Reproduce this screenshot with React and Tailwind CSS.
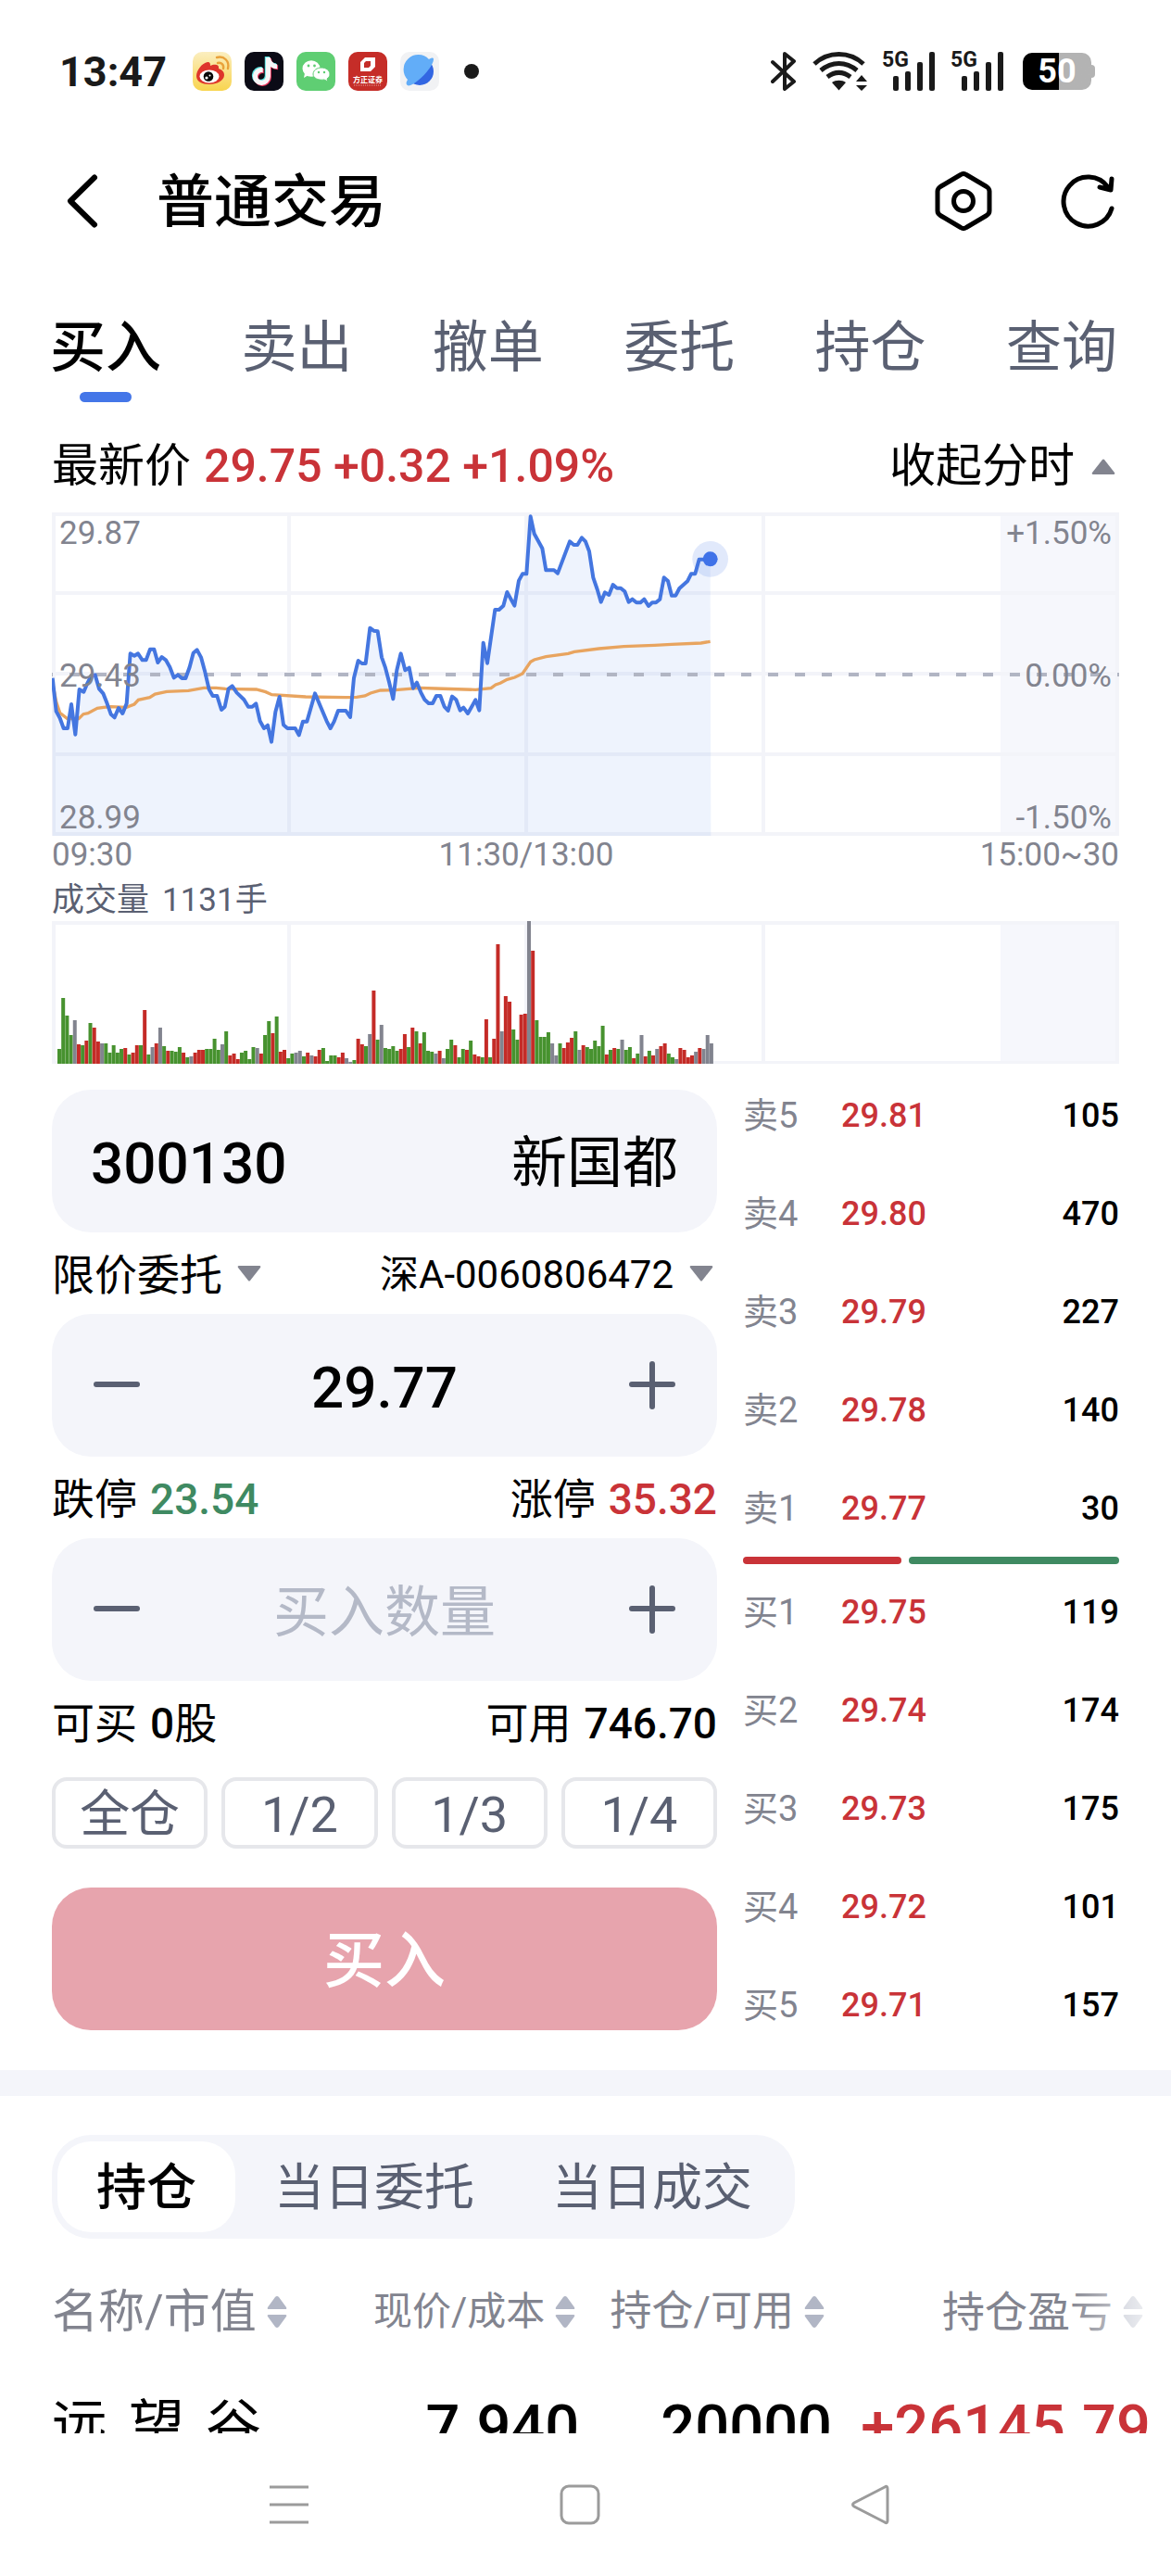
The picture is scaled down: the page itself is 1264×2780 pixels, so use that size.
import { useState } from "react";
import { FaTiktok } from "react-icons/fa6";

const tabs = ["买入", "卖出", "撤单", "委托", "持仓", "查询"];

const asks = [
  ["卖5", "29.81", 105],
  ["卖4", "29.80", 470],
  ["卖3", "29.79", 227],
  ["卖2", "29.78", 140],
  ["卖1", "29.77", 30],
];

const bids = [
  ["买1", "29.75", 119],
  ["买2", "29.74", 174],
  ["买3", "29.73", 175],
  ["买4", "29.72", 101],
  ["买5", "29.71", 157],
];

const priceLine =
  "50,575 62,683 74,705 86,738 99,738 111,660 124,758 137,612 151,620 163,592 175,568 188,565 201,610 214,625 227,658 239,692 251,703 264,672 277,690 290,658 302,496 315,503 327,496 341,517 353,517 366,482 379,482 391,525 404,507 417,517 430,540 443,574 456,565 469,576 481,576 494,540 506,494 518,484 531,508 544,556 557,612 569,633 583,633 597,678 608,668 620,610 632,601 647,623 670,645 684,668 697,668 709,658 722,715 735,738 747,728 759,782 772,685 785,636 798,727 811,738 836,738 848,760 861,716 874,716 900,625 938,715 950,738 962,716 975,681 1000,681 1014,702 1026,575 1040,519 1052,528 1064,528 1078,413 1090,422 1103,424 1116,508 1128,542 1140,588 1153,643 1165,550 1178,496 1192,550 1205,542 1218,608 1230,590 1243,622 1255,645 1268,657 1281,657 1293,633 1306,633 1319,668 1331,681 1344,635 1357,645 1370,680 1381,671 1395,690 1420,646 1432,680 1445,461 1458,527 1483,354 1496,354 1510,341 1522,297 1546,341 1560,260 1572,238 1585,238 1598,52 1610,108 1636,155 1648,226 1674,226 1686,236 1725,133 1738,144 1750,144 1764,121 1776,133 1788,165 1801,250 1814,288 1826,329 1839,298 1852,306 1865,273 1878,284 1890,284 1903,295 1916,329 1928,320 1941,331 1954,331 1966,320 1980,342 1992,331 2004,331 2017,320 2030,250 2043,261 2055,308 2068,308 2080,285 2106,262 2118,238 2131,238 2144,191 2180,191";

const averageLine =
  "50,590 62,652 74,688 98,707 135,707 150,692 165,689 195,673 215,670 240,668 290,670 315,660 328,646 365,638 382,627 420,619 490,616 540,607 580,607 610,610 710,612 740,620 760,629 870,636 1000,638 1035,637 1062,633 1080,624 1112,615 1160,614 1240,607 1290,609 1420,613 1470,608 1485,597 1500,592 1522,580 1547,573 1572,561 1598,523 1610,516 1648,506 1720,496 1740,490 1820,480 1900,473 2000,469 2055,466 2150,462 2180,457";

// g = down, r = up, k = flat, followed by the bar height
const volumes =
  "g16 g71 g52 g31 k47 r21 g20 r25 g44 r39 r24 k22 g22 g12 g20 g12 g16 r17 g10 r12 r20 g20 r58 g10 k18 r22 k39 g19 r14 g14 g13 g18 r12 g7 k8 r12 r15 r15 g16 g16 g27 g15 k21 g35 r9 r11 r5 g12 g14 g5 g18 k17 r11 g31 g46 r33 g51 r13 r15 g6 g11 k12 k14 g8 r12 k9 r8 r15 g17 g3 g9 g9 r7 r12 k6 k2 g4 r27 r21 g19 k32 r79 g26 k42 g17 g16 g19 g14 r16 r32 g18 r39 g35 r22 g34 g14 g13 k11 r14 k6 g16 g26 r20 g7 g16 r15 g25 r10 r8 g7 r48 g7 r27 r129 k35 r73 r67 g37 g26 r53 r54 k154 r122 g47 g29 g29 g34 k22 k9 g22 r17 r23 r28 g35 k15 r20 g18 g16 g25 g19 g41 r10 g15 r17 g16 k26 g15 g18 r6 g11 k31 r8 g14 r9 k16 r19 r22 g11 g7 k5 r17 r15 r7 r9 k13 r17 k16 k31 k22"
    .split(" ")
    .map((v) => ({ side: v[0], height: Number(v.slice(1)) }));

const barColors = { g: "#47922f", r: "#c42b27", k: "#82848f" };

function AppIcons() {
  return (
    <div className="flex items-center gap-[14px]">
      <svg className="size-[42px]" viewBox="0 0 42 42" aria-label="微博">
        <defs>
          <linearGradient id="weibo" x1="0" y1="0" x2="0" y2="1">
            <stop offset="0" stopColor="#fbeec0" />
            <stop offset="1" stopColor="#f8d44e" />
          </linearGradient>
        </defs>
        <rect width="42" height="42" rx="10" fill="url(#weibo)" />
        <path
          d="M4 26c0-6 6-14 12-15 3 0 3 2 3 4 4-2 10-2 9 3 3 1 6 3 6 7 0 6-8 10-16 10S4 32 4 26z"
          fill="#de352b"
        />
        <ellipse cx="18" cy="26.500" rx="10.500" ry="7" fill="#fff" />
        <circle cx="17" cy="26.500" r="5.300" fill="#080808" />
        <circle cx="15" cy="28" r="1.600" fill="#fff" />
        <circle cx="18.500" cy="25.500" r="1" fill="#fff" />
        <path
          d="M27 12c4-1 7 2 6 6M26 6c8-2 14 4 12 12"
          fill="none"
          stroke="#e9a13a"
          strokeWidth="2.400"
          strokeLinecap="round"
        />
      </svg>
      <svg className="size-[42px]" viewBox="0 0 42 42" aria-label="抖音">
        <rect width="42" height="42" rx="10" fill="#0b0b16" />
        <FaTiktok x="6" y="5" size="30" color="#57e3e2" />
        <FaTiktok x="8" y="7" size="30" color="#e8365d" />
        <FaTiktok x="7" y="6" size="30" color="#f6f6f8" />
      </svg>
      <svg className="size-[42px]" viewBox="0 0 42 42" aria-label="微信">
        <rect width="42" height="42" rx="10" fill="#5fce73" />
        <path d="M9 23l-1 5 5-3z" fill="#fff" />
        <ellipse cx="16" cy="18" rx="9.500" ry="8.800" fill="#fff" />
        <path
          d="M27 17c5 0 9 3 9 7 0 2-1 4-3 5l1 3-4-2c-7 1-12-2-12-6s4-7 9-7z"
          fill="#fff"
          stroke="#5fce73"
          strokeWidth="1"
        />
        <g fill="#5fce73">
          <circle cx="13" cy="15" r="1.400" />
          <circle cx="19.500" cy="15" r="1.400" />
          <circle cx="24" cy="22" r="1.200" />
          <circle cx="30" cy="22" r="1.200" />
        </g>
      </svg>
      <svg className="size-[42px]" viewBox="0 0 42 42" aria-label="方正证券">
        <rect width="42" height="42" rx="10" fill="#c52d28" />
        <path
          d="M18 6h11v10l-5 5H13V11zM19 10l-2 2v5h5l2-2v-5z"
          fill="#fff"
          fillRule="evenodd"
        />
        <text x="21" y="33" fontSize="8" fontWeight="700" textAnchor="middle" fill="#fff">
          方正证券
        </text>
        <path d="M6 36h30" stroke="#e7a5a2" strokeDasharray="1 1" />
      </svg>
      <svg className="size-[42px]" viewBox="0 0 42 42" aria-label="浏览器">
        <rect width="42" height="42" rx="10" fill="#f1f2f4" />
        <circle cx="21" cy="21" r="15" fill="#3266e2" />
        <path
          d="M31 8c3-2 5-2 5 0 0 5-8 16-17 23-6 5-11 7-12 4-1-1 0-3 1-5a15 15 0 0 1 23-22z"
          fill="#62adf8"
        />
      </svg>
      <span className="ml-[13px] size-4 rounded-full bg-[#1a1a1a]" />
    </div>
  );
}

function Signal() {
  return (
    <div className="relative">
      <span className="absolute top-0 left-0 text-[23px] leading-[18px] font-bold">5G</span>
      <svg className="h-[42px] w-[58px]" viewBox="0 0 58 42" fill="#1a1a1a">
        <rect x="12" y="26" width="6" height="16" rx="2" />
        <rect x="25" y="21" width="6" height="21" rx="2" />
        <rect x="38" y="11" width="6" height="31" rx="2" />
        <rect x="51" y="0" width="6" height="42" rx="2" />
      </svg>
    </div>
  );
}

function StatusBar() {
  return (
    <div className="flex h-[152px] items-center justify-between pt-[2px] pr-[82px] pl-16 text-[#1a1a1a]">
      <div className="flex items-center gap-7">
        <span className="text-[45px] leading-none font-bold">13:47</span>
        <AppIcons />
      </div>
      <div className="flex items-center gap-4">
        <svg className="h-11 w-7" viewBox="0 0 28 44" fill="none" stroke="#1a1a1a" strokeWidth="4">
          <path d="M2 12l23 21-10 8V3l10 8L2 33" strokeLinecap="round" strokeLinejoin="round" />
        </svg>
        <svg className="h-[42px] w-[60px]" viewBox="0 0 60 42" fill="none" stroke="#1a1a1a" strokeWidth="5">
          <path d="M3 13C18-1 41-1 56 13M10 20c12-10 27-10 39 0M17 27c8-6 17-6 25 0" />
          <path d="M22 33c4-3 11-3 15 0l-7.500 8.500z" fill="#1a1a1a" stroke="none" />
          <path d="M48 32l6-7 6 7zM48 36l6 6 6-6z" fill="#1a1a1a" stroke="none" />
        </svg>
        <Signal />
        <Signal />
        <div className="flex items-center pl-1">
          <span className="flex h-10 w-[74px] items-center justify-center rounded-[10px] bg-linear-to-r from-black from-53% to-[#b3b3b3] to-53% text-[36px] leading-none font-bold text-white">
            50
          </span>
          <span className="h-[14px] w-[4px] rounded-r bg-[#b3b3b3]" />
        </div>
      </div>
    </div>
  );
}

function Header() {
  return (
    <header className="flex h-[130px] items-center justify-between pr-[58px] pl-[70px]">
      <div className="flex items-center gap-[62px]">
        <button aria-label="返回">
          <svg className="h-[60px] w-[37px]" viewBox="0 0 37 60" fill="none" stroke="#000" strokeWidth="6">
            <path d="M32 4.500L6 30l26 25.500" strokeLinecap="round" strokeLinejoin="round" />
          </svg>
        </button>
        <h1 className="pt-1 text-[62px] leading-none font-medium">普通交易</h1>
      </div>
      <div className="flex items-center gap-[70px]">
        <button aria-label="设置">
          <svg className="size-16" viewBox="0 0 64 64" fill="none" stroke="#000" strokeWidth="5">
            <path
              d="M29 3.500q3-2 6 0l22 13q3 2 3 5v21q0 3-3 5l-22 13q-3 2-6 0l-22-13q-3-2-3-5v-21q0-3 3-5z"
              strokeLinejoin="round"
            />
            <circle cx="32" cy="32" r="10.500" />
          </svg>
        </button>
        <button aria-label="刷新">
          <svg className="size-16" viewBox="0 0 64 64" fill="none" stroke="#000" strokeWidth="5" strokeLinecap="round" strokeLinejoin="round">
            <path d="M58 40A26.500 26.500 0 1 1 54 17M58 8l-1 12-12-3" />
          </svg>
        </button>
      </div>
    </header>
  );
}

function PriceChart() {
  return (
    <div className="relative mt-5 text-[35px] leading-10 text-[#82848f]">
      <svg className="block w-full" viewBox="48 39 3456 1050">
        <rect x="3120" y="39" width="384" height="1047" fill="#f6f7fc" />
        <g stroke="#f3f4f9" strokeWidth="12" fill="none">
          <path d="M48 45H3504M48 300H3504M48 561H3504M48 822H3504M48 1080H3504" />
          <path d="M54 39V1086M816 39V1086M1584 39V1086M2352 39V1086M3498 39V1086" />
        </g>
        <polygon points={`50,1086 ${priceLine} 2182,1086`} fill="#4476e8" fillOpacity="0.09" />
        <path
          d="M48 564H3504"
          stroke="#b1b5c3"
          strokeWidth="12"
          strokeDasharray="33 54"
          strokeDashoffset="30"
        />
        <polyline points={averageLine} fill="none" stroke="#e8a45f" strokeWidth="10" />
        <polyline points={priceLine} fill="none" stroke="#4476e0" strokeWidth="12" strokeLinejoin="round" />
        <circle cx="2180" cy="190" r="58" fill="#4476e8" fillOpacity="0.16" />
        <circle cx="2180" cy="190" r="24" fill="#3f72e8" />
      </svg>
      <div className="absolute inset-0 flex flex-col justify-between px-2 pt-[3px]">
        <div className="flex justify-between">
          <span>29.87</span>
          <span>+1.50%</span>
        </div>
        <div className="flex justify-between">
          <span>29.43</span>
          <span>0.00%</span>
        </div>
        <div className="flex justify-between">
          <span>28.99</span>
          <span>-1.50%</span>
        </div>
      </div>
    </div>
  );
}

function VolumeChart() {
  return (
    <svg className="mt-[2px] block w-full" viewBox="0 0 1152 154">
      <rect x="1024" width="128" height="154" fill="#f6f7fc" />
      <path
        d="M0 2H1152M0 153H1152M2 0V154M256 0V154M512 0V154M768 0V154M1150 0V154"
        stroke="#f3f4f9"
        strokeWidth="4"
      />
      {volumes.map((v, i) => (
        <rect
          key={i}
          x={6 + i * 4.19}
          y={154 - v.height}
          width="4"
          height={v.height}
          fill={barColors[v.side]}
        />
      ))}
    </svg>
  );
}

function Triangle({ up }) {
  return (
    <svg
      className={up ? "h-[17px] w-[26px] rotate-180" : "pointer-events-none h-[17px] w-[26px]"}
      viewBox="0 0 26 17"
      fill="#82848f"
    >
      <path d="M2 0h22q2 0 1 2L14 16q-1 1-2 0L1 2Q0 0 2 0z" />
    </svg>
  );
}

function Stepper({ label, value, placeholder, onChange, onStep }) {
  return (
    <div className="flex h-[154px] items-center rounded-[42px] bg-[#f4f5fa] px-[44px]">
      <button aria-label={`减少${label}`} onClick={() => onStep(-1)}>
        <svg className="size-[52px]" viewBox="0 0 52 52" stroke="#5a6072" strokeWidth="6" strokeLinecap="round">
          <path d="M4 25h44" />
        </svg>
      </button>
      <input
        aria-label={label}
        value={value}
        placeholder={placeholder}
        onChange={(e) => onChange(e.target.value)}
        className="w-full min-w-0 flex-1 bg-transparent pt-[6px] text-center text-[62px] leading-[80px] font-medium outline-none placeholder:text-[60px] placeholder:font-normal placeholder:text-[#b4b9c7]"
      />
      <button aria-label={`增加${label}`} onClick={() => onStep(1)}>
        <svg className="size-[52px]" viewBox="0 0 52 52" stroke="#5a6072" strokeWidth="6" strokeLinecap="round">
          <path d="M4 25h44M26 3v46" />
        </svg>
      </button>
    </div>
  );
}

function OrderForm() {
  const [code, setCode] = useState("300130");
  const [price, setPrice] = useState("29.77");
  const [amount, setAmount] = useState("");

  return (
    <form className="w-[718px] shrink-0" onSubmit={(e) => e.preventDefault()}>
      <div className="flex h-[154px] items-center justify-between rounded-[42px] bg-[#f4f5fa] px-[42px] pt-[6px]">
        <input
          aria-label="股票代码"
          value={code}
          onChange={(e) => setCode(e.target.value)}
          className="w-full min-w-0 flex-1 bg-transparent text-[62px] leading-[80px] font-medium outline-none"
        />
        <span className="text-[60px] leading-[80px]">新国都</span>
      </div>

      <div className="flex h-[88px] items-center justify-between pr-1">
        <div className="flex items-center gap-4">
          <select aria-label="委托方式" className="appearance-none pt-1 text-[46px] leading-[60px] outline-none">
            <option>限价委托</option>
          </select>
          <Triangle />
        </div>
        <div className="flex items-center gap-4">
          <select aria-label="股东账户" className="appearance-none pt-1 text-[42px] leading-[60px] outline-none">
            <option>深A-0060806472</option>
          </select>
          <Triangle />
        </div>
      </div>

      <Stepper
        label="买入价格"
        value={price}
        onChange={setPrice}
        onStep={(d) => setPrice((Number(price) + d * 0.01).toFixed(2))}
      />

      <div className="flex h-[88px] items-center justify-between pt-1 text-[46px] leading-[60px]">
        <span className="flex gap-[14px]">
          跌停<span className="font-medium text-[#3f8a62]">23.54</span>
        </span>
        <span className="flex gap-[14px]">
          涨停<span className="font-medium text-[#c93338]">35.32</span>
        </span>
      </div>

      <Stepper
        label="买入数量"
        placeholder="买入数量"
        value={amount}
        onChange={setAmount}
        onStep={(d) => setAmount(String(Math.max(0, Number(amount) + d * 100)))}
      />

      <div className="flex h-[88px] items-center justify-between pt-1 text-[46px] leading-[60px]">
        <span className="flex gap-[14px]">
          可买
          <span>
            <span className="font-medium">0</span>股
          </span>
        </span>
        <span className="flex gap-[14px]">
          可用<span className="font-medium">746.70</span>
        </span>
      </div>

      <div className="mt-4 grid grid-cols-4 gap-[15px]">
        {["全仓", "1/2", "1/3", "1/4"].map((part) => (
          <button
            key={part}
            type="button"
            className="flex h-[77px] items-center justify-center rounded-2xl border-4 border-[#e6e7eb] pt-1 text-[54px] leading-none text-[#5a6072]"
          >
            {part}
          </button>
        ))}
      </div>

      <button
        type="submit"
        className="mt-[42px] h-[154px] w-full rounded-[42px] bg-[#e7a4ad] pt-1 text-[66px] font-medium text-white"
      >
        买入
      </button>
    </form>
  );
}

function Quotes({ rows }) {
  return (
    <div className="flex flex-col gap-[50px]">
      {rows.map(([name, price, count]) => (
        <div key={name} className="flex text-[36px] leading-[56px]">
          <span className="w-[106px] text-[38px] text-[#82848f]">{name}</span>
          <span className="flex-1 font-medium text-[#c93338]">{price}</span>
          <span className="font-medium">{count}</span>
        </div>
      ))}
    </div>
  );
}

function SortArrows() {
  return (
    <svg className="h-[34px] w-[22px] shrink-0" viewBox="0 0 22 34" fill="#b1b6c5">
      <path d="M11 0q1 0 2 1l8 11q1 2-1 2H2q-2 0-1-2L9 1q1-1 2-1zM11 34q1 0 2-1l8-11q1-2-1-2H2q-2 0-1 2l8 11q1 1 2 1z" />
    </svg>
  );
}

function Holdings() {
  return (
    <section className="pt-[42px]">
      <div className="mx-14 flex w-fit rounded-[42px] bg-[#f4f5fa] py-[7px] pr-1 pl-[6px] text-[54px] leading-[98px] text-[#5a6072]">
        <button className="rounded-[36px] bg-white px-[42px] pt-1 leading-[94px] font-medium text-black">
          持仓
        </button>
        <button className="px-[42px] pt-1 leading-[94px]">当日委托</button>
        <button className="px-[42px] pt-1 leading-[94px]">当日成交</button>
      </div>

      <div className="relative pt-[49px] pr-[22px] pl-14">
        <table className="w-full table-fixed whitespace-nowrap">
          <thead className="text-[#82848f]">
            <tr className="h-[60px]">
              <th className="w-[25%] p-0 font-normal">
                <div className="flex items-center gap-[11px] text-[50px] leading-[60px]">
                  名称/市值
                  <SortArrows />
                </div>
              </th>
              <th className="w-[23%] p-0 font-normal">
                <div className="flex items-center justify-end gap-[11px] pr-1 text-[42px] leading-[60px]">
                  现价/成本
                  <SortArrows />
                </div>
              </th>
              <th className="w-[23%] p-0 font-normal">
                <div className="flex items-center justify-end gap-[11px] pr-2 text-[45px] leading-[60px]">
                  持仓/可用
                  <SortArrows />
                </div>
              </th>
              <th className="w-[29%] p-0 font-normal">
                <div className="flex items-center justify-end gap-[11px] pr-2 text-[46px] leading-[60px]">
                  持仓盈亏
                  <SortArrows />
                </div>
              </th>
            </tr>
          </thead>
          <tbody className="text-[65px] leading-[72px] font-medium">
            <tr>
              <td className="p-0 pt-[58px]">
                <div className="flex w-[226px] justify-between text-[60px] font-normal">
                  <span>远</span>
                  <span>望</span>
                  <span>谷</span>
                </div>
              </td>
              <td className="p-0 pt-[58px] text-right">7.940</td>
              <td className="p-0 pt-[58px] text-right">20000</td>
              <td className="p-0 pt-[58px] text-right text-[#c93338]">+26145.79</td>
            </tr>
          </tbody>
        </table>
        <div className="pointer-events-none absolute top-[49px] right-0 h-[60px] w-[112px] bg-linear-to-r from-white/0 to-white" />
      </div>
    </section>
  );
}

function NavBar() {
  return (
    <nav className="flex h-[154px] shrink-0 items-center justify-center gap-[270px] bg-white pr-3">
      <button aria-label="菜单">
        <svg className="size-11" viewBox="0 0 44 44" stroke="#9b9b9b" strokeWidth="3">
          <path d="M1 3h42M1 22h42M1 41h42" />
        </svg>
      </button>
      <button aria-label="主页">
        <svg className="size-11" viewBox="0 0 44 44" fill="none" stroke="#9b9b9b" strokeWidth="3">
          <rect x="2" y="2" width="40" height="40" rx="8" />
        </svg>
      </button>
      <button aria-label="返回上一页">
        <svg className="size-11" viewBox="0 0 44 44" fill="none" stroke="#9b9b9b" strokeWidth="3">
          <path d="M37 3q3-2 3 2v34q0 4-3 2L4 24q-3-2 0-4z" />
        </svg>
      </button>
    </nav>
  );
}

export default function App() {
  const [tab, setTab] = useState("买入");

  return (
    <div className="flex h-screen flex-col bg-white font-[Roboto,'Noto_Sans_CJK_SC',sans-serif] text-black">
      <div className="min-h-0 flex-1 overflow-hidden">
        <StatusBar />
        <Header />

        <div className="px-14">
          <div className="-ml-[2px] flex justify-between pt-[58px] pr-[2px]">
            {tabs.map((name) => (
              <button
                key={name}
                onClick={() => setTab(name)}
                className={
                  name === tab
                    ? "flex flex-col items-center text-[60px] leading-[72px] font-medium"
                    : "flex flex-col items-center text-[60px] leading-[72px] text-[#5a6072]"
                }
              >
                {name}
                <span
                  className={
                    name === tab
                      ? "mt-[11px] h-[11px] w-14 rounded-full bg-[#4476e8]"
                      : "mt-[11px] h-[11px] w-14"
                  }
                />
              </button>
            ))}
          </div>

          <div className="mt-[39px] flex items-center justify-between text-[50px] leading-[60px]">
            <div className="flex gap-[14px]">
              最新价
              <span className="font-medium text-[#c93338]">29.75 +0.32 +1.09%</span>
            </div>
            <button className="flex items-center gap-[18px] pr-1">
              收起分时
              <Triangle up />
            </button>
          </div>

          <PriceChart />
          <div className="grid grid-cols-9 text-[35px] leading-10 text-[#82848f]">
            <span className="col-span-3">09:30</span>
            <span className="col-span-2 text-center">11:30/13:00</span>
            <span className="col-span-4 text-right">15:00~30</span>
          </div>
          <div className="mt-[9px] flex gap-[14px] text-[35px] leading-10 text-[#5a6072]">
            <span>成交量</span>
            <span>1131手</span>
          </div>
          <VolumeChart />

          <div className="mt-7 flex gap-7 pb-[42px]">
            <OrderForm />
            <div className="flex-1">
              <Quotes rows={asks} />
              <div className="my-6 flex h-2 gap-2">
                <span className="flex-3 rounded-full bg-[#c93338]" />
                <span className="flex-4 rounded-full bg-[#3f8a62]" />
              </div>
              <Quotes rows={bids} />
            </div>
          </div>
        </div>

        <div className="h-7 bg-[#f4f5fa]" />
        <Holdings />
      </div>
      <NavBar />
    </div>
  );
}
